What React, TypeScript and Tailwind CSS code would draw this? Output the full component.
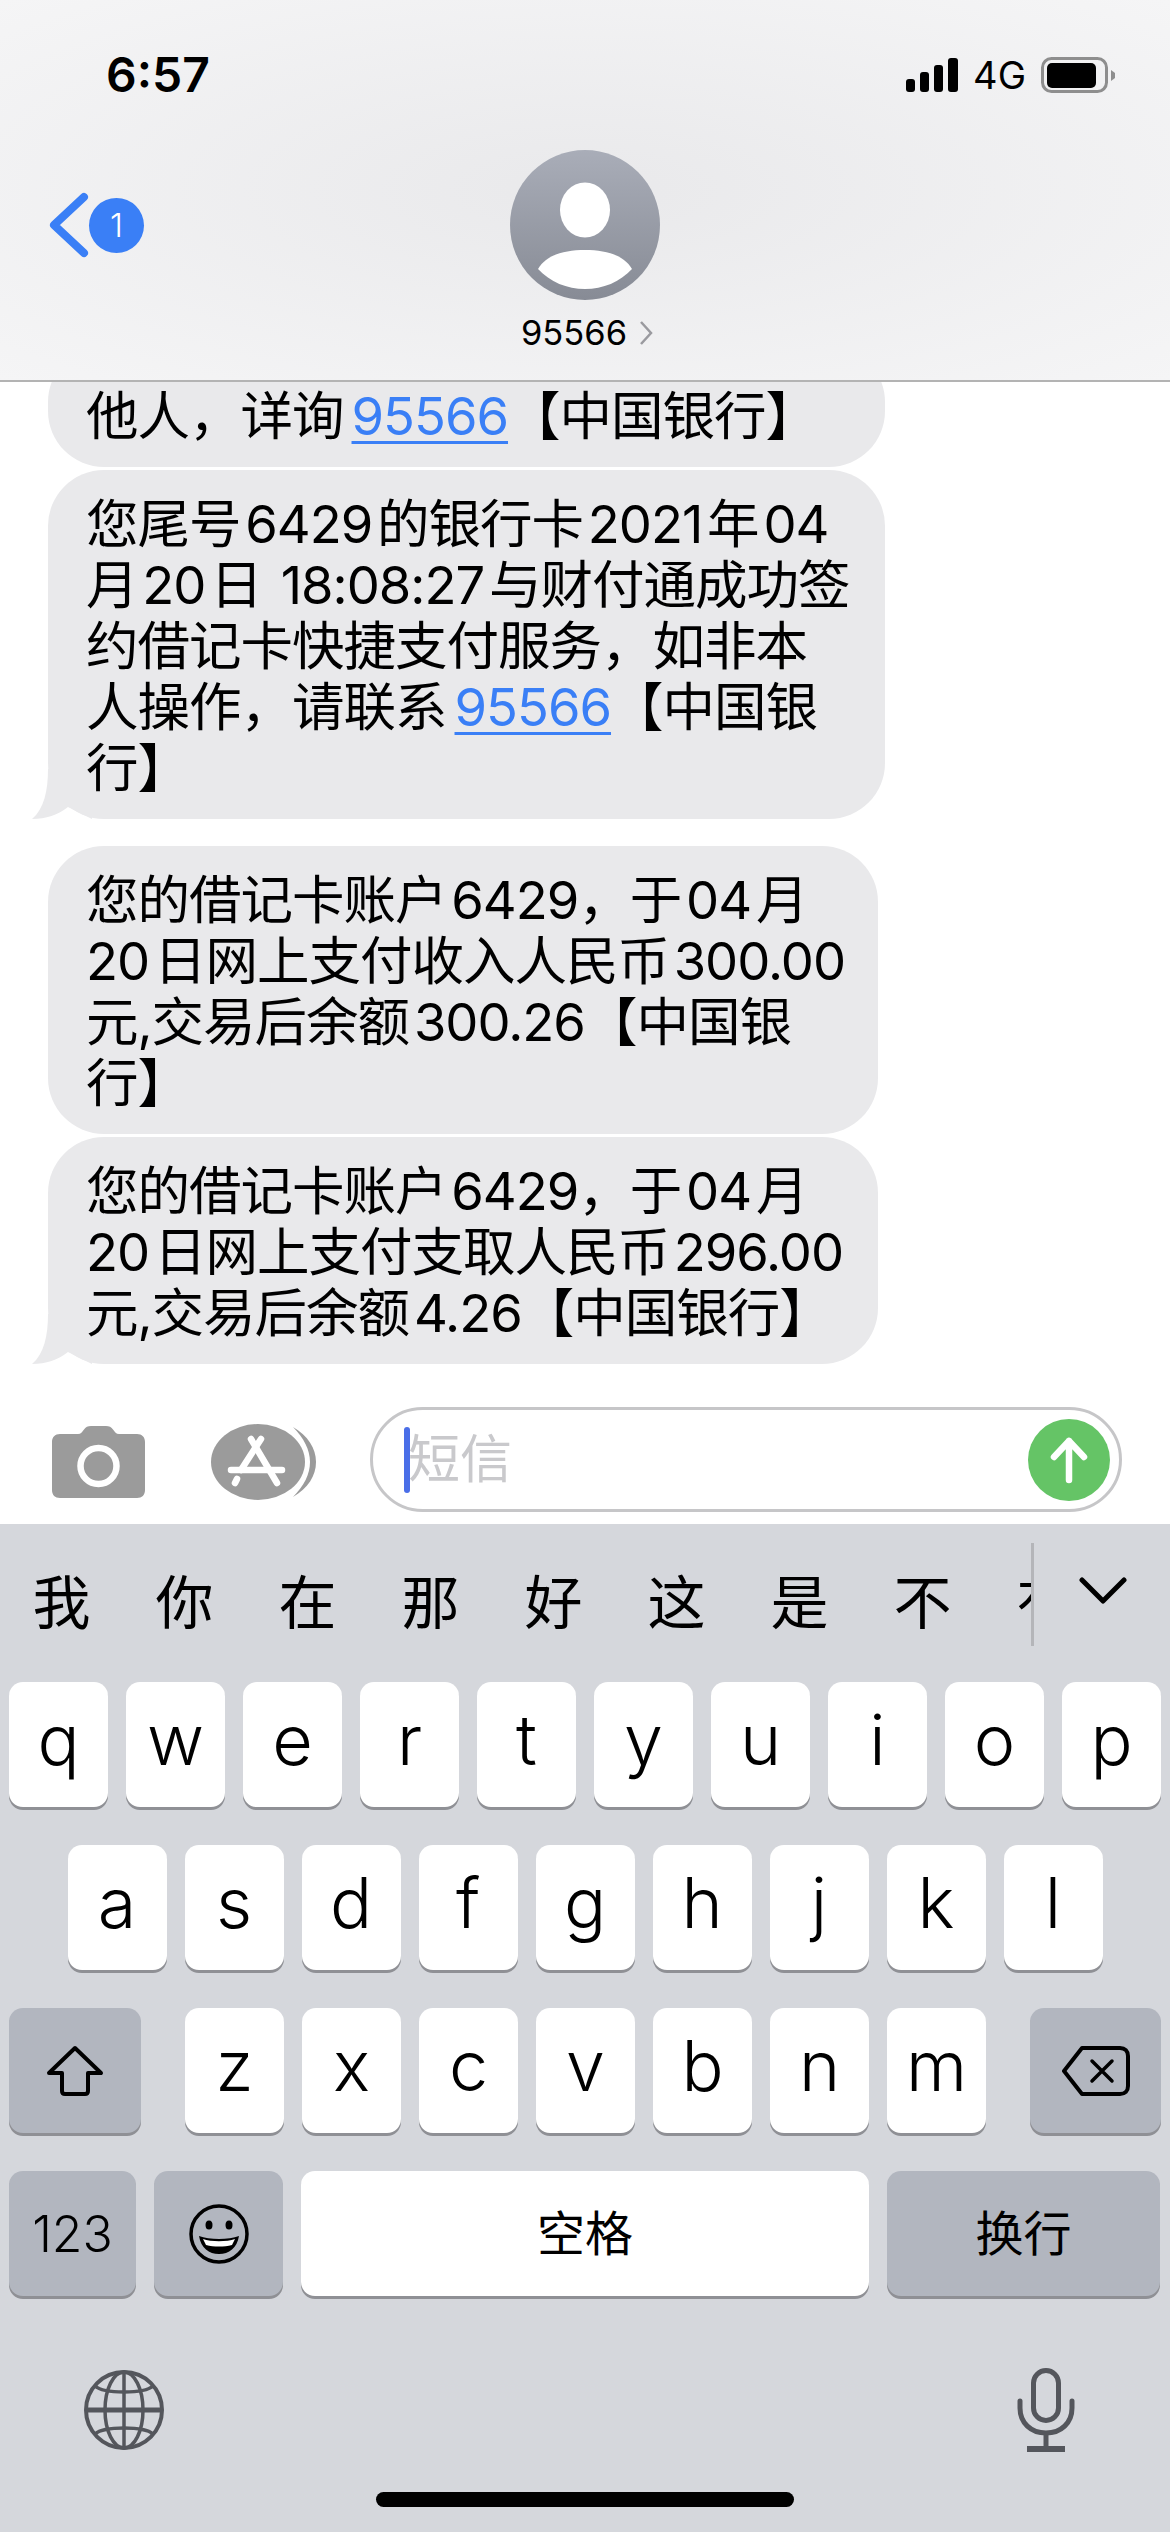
const sans = "font-['Inter','Noto_Sans_CJK_SC',sans-serif]";

function Tail() {
  return (
    <svg className="absolute left-[-16px] bottom-0" width="60" height="50" viewBox="0 0 60 50">
      <path d="M16 0 C16 22 12 40 0 50 C14 50 26 46 36 38 L60 50 L60 0 Z" fill="#e9e9eb" />
    </svg>
  );
}

function Bubble({ width, lines, tail, className }: { width: string; lines: React.ReactNode[]; tail?: boolean; className?: string }) {
  return (
    <div
      className={`relative ml-[48px] shrink-0 rounded-[56px] bg-[#e9e9eb] pb-[20px] pl-[38px] pt-[24px] text-[52.5px] leading-[61px] tracking-[-1px] text-black [word-spacing:-9px] ${width} ${className ?? ""}`}
    >
      {tail && <Tail />}
      {lines.map((l, i) => (
        <div key={i} className="relative whitespace-nowrap">
          {l}
        </div>
      ))}
    </div>
  );
}

function Link({ children }: { children: string }) {
  return <span className="text-[#3a7ff6] underline decoration-[3px] underline-offset-[6px]">{children}</span>;
}

function Key({ children, dark, width = "w-[99px]", className }: { children: React.ReactNode; dark?: boolean; width?: string; className?: string }) {
  return (
    <div
      className={`flex h-[125px] shrink-0 items-center justify-center rounded-[14px] shadow-[0_3px_0_#8f9095] text-black ${dark ? "bg-[#b2b6bf]" : "bg-white"} ${width} ${className ?? ""}`}
    >
      {children}
    </div>
  );
}

function Letter({ c }: { c: string }) {
  return (
    <Key>
      <span className="pb-[10px] text-[70px] font-light leading-none">{c}</span>
    </Key>
  );
}

function Signal() {
  return (
    <svg width="52" height="34" viewBox="0 0 52 34" fill="#000">
      <rect x="0" y="21" width="9" height="13" rx="3" />
      <rect x="14" y="14" width="9" height="20" rx="3" />
      <rect x="28" y="7" width="9" height="27" rx="3" />
      <rect x="42" y="0" width="10" height="34" rx="3" />
    </svg>
  );
}

function Battery() {
  return (
    <svg width="74" height="36" viewBox="0 0 74 36">
      <rect x="1.5" y="1.5" width="64" height="33" rx="9" fill="none" stroke="#8e8e8e" strokeWidth="3" />
      <rect x="6" y="6" width="49" height="25" rx="5" fill="#000" />
      <path d="M70 13 L74 16 L74 21 L70 24 Z" fill="#8e8e8e" />
    </svg>
  );
}

function Avatar() {
  return (
    <svg width="150" height="150" viewBox="0 0 150 150">
      <defs>
        <linearGradient id="av" x1="0" y1="0" x2="0" y2="1">
          <stop offset="0" stopColor="#a9adb8" />
          <stop offset="1" stopColor="#878b95" />
        </linearGradient>
      </defs>
      <circle cx="75" cy="75" r="75" fill="url(#av)" />
      <ellipse cx="75" cy="60" rx="25" ry="27.5" fill="#fff" />
      <path d="M28 119 C36 105 54 100 75 100 C96 100 114 105 122 119 C110 132 93 139 75 139 C57 139 40 132 28 119 Z" fill="#fff" />
    </svg>
  );
}

function Camera() {
  return (
    <svg width="93" height="72" viewBox="0 0 93 72">
      <path
        d="M8 8 H26 C29 8 30 6 32 3.5 C33.5 1 36 0 39 0 H54 C57 0 59.5 1 61 3.5 C63 6 64 8 67 8 H85 C90 8 93 11 93 16 V64 C93 69 90 72 85 72 H8 C3 72 0 69 0 64 V16 C0 11 3 8 8 8 Z"
        fill="#9b9b9b"
      />
      <circle cx="46.5" cy="40" r="18" fill="none" stroke="#fff" strokeWidth="6.5" />
    </svg>
  );
}

function AppStore() {
  return (
    <svg width="106" height="76" viewBox="0 0 106 76">
      <path d="M82 3 C97 12 105 24 105 38 C105 52 97 64 82 73 C93 62 99 50 99 38 C99 26 93 14 82 3 Z" fill="#9b9b9b" />
      <ellipse cx="47" cy="38" rx="47" ry="38" fill="#9b9b9b" />
      <g stroke="#fff" strokeWidth="6.5" strokeLinecap="round" fill="none">
        <path d="M40 15 L66 59" />
        <path d="M50 15 L30 46" />
        <path d="M20 46 H71" />
        <path d="M26 55 L24 59" />
      </g>
    </svg>
  );
}

function Shift() {
  return (
    <svg width="60" height="52" viewBox="0 0 60 52" fill="none" stroke="#000" strokeWidth="4" strokeLinejoin="round">
      <path d="M30 3 L56 28 H43 V46 C43 48 42 49 40 49 H20 C18 49 17 48 17 46 V28 H4 Z" />
    </svg>
  );
}

function Backspace() {
  return (
    <svg width="68" height="50" viewBox="0 0 68 50" fill="none" stroke="#000" strokeWidth="4" strokeLinejoin="round" strokeLinecap="round">
      <path d="M20 2 H58 C63 2 66 5 66 10 V40 C66 45 63 48 58 48 H20 L2 25 Z" />
      <path d="M30 15 L50 35 M50 15 L30 35" strokeWidth="3.5" />
    </svg>
  );
}

function Smiley() {
  return (
    <svg width="60" height="60" viewBox="0 0 60 60">
      <circle cx="30" cy="30" r="28" fill="none" stroke="#000" strokeWidth="3.5" />
      <ellipse cx="20" cy="21" rx="3.5" ry="4.5" fill="#000" />
      <ellipse cx="40" cy="21" rx="3.5" ry="4.5" fill="#000" />
      <path d="M10 32 C20 36 40 36 50 32 C48 44 40 50 30 50 C20 50 12 44 10 32 Z" fill="#000" />
      <path d="M14 35 C22 38 38 38 46 35 C45 37 44 39 43 41 C35 43 25 43 17 41 C16 39 15 37 14 35 Z" fill="#fff" />
    </svg>
  );
}

function Globe() {
  return (
    <svg width="80" height="80" viewBox="0 0 80 80" fill="none" stroke="#54565c" strokeWidth="3.5">
      <circle cx="40" cy="40" r="38" strokeWidth="4" />
      <ellipse cx="40" cy="40" rx="19" ry="38" />
      <path d="M40 2 V78" />
      <path d="M2 40 H78" strokeWidth="5" />
      <path d="M11 16 C20 24 60 24 69 16" />
      <path d="M11 64 C20 56 60 56 69 64" />
    </svg>
  );
}

function Mic() {
  return (
    <svg width="58" height="84" viewBox="0 0 58 84" fill="none" stroke="#54565c" strokeWidth="5">
      <rect x="16.5" y="2.5" width="25" height="50" rx="12.5" />
      <path d="M3 33 V40 C3 55 14 65 29 65 C44 65 55 55 55 40 V33" strokeLinecap="round" />
      <path d="M29 65 V80" />
      <path d="M10 81 H48" strokeWidth="6" />
    </svg>
  );
}

export default function App() {
  const row1 = ["q", "w", "e", "r", "t", "y", "u", "i", "o", "p"];
  const row2 = ["a", "s", "d", "f", "g", "h", "j", "k", "l"];
  const row3 = ["z", "x", "c", "v", "b", "n", "m"];
  const candidates = ["我", "你", "在", "那", "好", "这", "是", "不", "有"];

  return (
    <div className={`flex h-[2532px] w-[1170px] flex-col overflow-hidden bg-white ${sans}`}>
      <header className="relative z-10 h-[382px] shrink-0 border-b-2 border-[#b3b3b3] bg-[radial-gradient(ellipse_at_center,#e9e9eb_0%,#f5f5f6_100%)] pt-[52px]">
        <div className="flex h-[46px] items-center justify-between pl-[106px] pr-[55px]">
          <span className="text-[48px] font-semibold leading-none text-black">6:57</span>
          <div className="flex items-center">
            <Signal />
            <span className="ml-[15px] mr-[15px] text-[38px] leading-none text-black">4G</span>
            <Battery />
          </div>
        </div>
        <div className="mt-[52px] grid grid-cols-[1fr_150px_1fr]">
          <div className="flex h-[150px] items-center pl-[49px]">
            <svg width="40" height="66" viewBox="0 0 40 66" fill="none" stroke="#3a7ff6" strokeWidth="8" strokeLinecap="round" strokeLinejoin="round">
              <path d="M35 5 L5 33 L35 61" />
            </svg>
            <span className="flex h-[55px] w-[55px] items-center justify-center rounded-full bg-[#3a7ff6] text-[33px] font-light leading-none text-white">1</span>
          </div>
          <div className="flex flex-col items-center">
            <Avatar />
            <div className="mt-[16px] flex items-center gap-[12px] whitespace-nowrap pl-[4px]">
              <span className="text-[34.5px] leading-[34px] text-black">95566</span>
              <svg width="14" height="24" viewBox="0 0 14 24" fill="none" stroke="#9a9a9f" strokeWidth="2.5">
                <path d="M2 1 L12 12 L2 23" />
              </svg>
            </div>
          </div>
        </div>
      </header>

      <main className="flex flex-1 flex-col justify-end overflow-hidden">
        <Bubble
          width="w-[837px]"
          className="pt-[40px]"
          lines={[
            <>
              他人，详询<span className="ml-[8px]"><Link>95566</Link></span>【中国银行】
            </>,
          ]}
        />
        <Bubble
          width="w-[837px]"
          className="mt-[3px]"
          tail
          lines={[
            "您尾号 6429 的银行卡 2021 年 04",
            "月 20 日\u00a0\u00a0\u00a0\u00a018:08:27 与财付通成功签",
            "约借记卡快捷支付服务，如非本",
            <>
              人操作，请联系<span className="ml-[8px]"><Link>95566</Link></span>【中国银
            </>,
            "行】",
          ]}
        />
        <Bubble
          width="w-[830px]"
          className="mt-[27px]"
          lines={["您的借记卡账户 6429，于 04 月", "20 日网上支付收入人民币 300.00", "元,交易后余额 300.26【中国银", "行】"]}
        />
        <Bubble
          width="w-[830px]"
          className="mt-[3px]"
          tail
          lines={["您的借记卡账户 6429，于 04 月", "20 日网上支付支取人民币 296.00", "元,交易后余额 4.26【中国银行】"]}
        />
      </main>

      <section className="flex h-[160px] shrink-0 items-start pl-[52px] pt-[43px]">
        <div className="mt-[17px] flex items-center">
          <Camera />
          <div className="ml-[66px]">
            <AppStore />
          </div>
        </div>
        <div className="ml-[53px] flex h-[105px] w-[752px] items-center rounded-full border-[3px] border-[#c6c6c8] pl-[31px] pr-[9px]">
          <span className="h-[66px] w-[6px] shrink-0 rounded-full bg-[#4a6ee8]" />
          <span className="ml-[-2px] flex-1 text-[52px] leading-none text-[#c9c9cc]">短信</span>
          <span className="flex h-[82px] w-[82px] items-center justify-center rounded-full bg-[#65c466]">
            <svg width="44" height="48" viewBox="0 0 44 48" fill="none" stroke="#fff" strokeWidth="6.5" strokeLinecap="round" strokeLinejoin="round">
              <path d="M22 44 V5 M7 21 L22 5 L37 21" />
            </svg>
          </span>
        </div>
      </section>

      <section className="flex h-[1008px] shrink-0 flex-col bg-[#d5d7dc]">
        <div className="flex h-[158px] shrink-0 items-start">
          <div className="mt-[19px] flex h-[103px] w-[1034px] overflow-hidden border-r-[3px] border-[#b4b5b9]">
            {candidates.map((c) => (
              <span key={c} className="flex h-[103px] w-[123px] shrink-0 items-center justify-center pt-[16px] text-[58px] leading-none text-black">
                {c}
              </span>
            ))}
          </div>
          <svg className="ml-[45px] mt-[53px]" width="48" height="28" viewBox="0 0 48 28" fill="none" stroke="#000" strokeWidth="5" strokeLinecap="round" strokeLinejoin="round">
            <path d="M3 3 L24 24 L45 3" />
          </svg>
        </div>

        <div className="flex flex-col gap-[38px] px-[9px]">
          <div className="flex justify-center gap-[18px]">
            {row1.map((c) => (
              <Letter key={c} c={c} />
            ))}
          </div>
          <div className="flex justify-center gap-[18px]">
            {row2.map((c) => (
              <Letter key={c} c={c} />
            ))}
          </div>
          <div className="flex items-center justify-between">
            <Key dark width="w-[132px]">
              <Shift />
            </Key>
            <div className="flex gap-[18px]">
              {row3.map((c) => (
                <Letter key={c} c={c} />
              ))}
            </div>
            <Key dark width="w-[131px]">
              <Backspace />
            </Key>
          </div>
          <div className="flex gap-[18px]">
            <Key dark width="w-[127px]">
              <span className="text-[50px] font-light leading-none">123</span>
            </Key>
            <Key dark width="w-[129px]">
              <Smiley />
            </Key>
            <Key width="w-[568px]">
              <span className="text-[48px] leading-none">空格</span>
            </Key>
            <Key dark width="w-[273px]">
              <span className="text-[48px] leading-none">换行</span>
            </Key>
          </div>
        </div>

        <div className="mt-[72px] flex items-center justify-between pl-[84px] pr-[95px]">
          <Globe />
          <Mic />
        </div>
        <div className="mx-auto mt-[40px] h-[15px] w-[418px] rounded-full bg-black" />
      </section>
    </div>
  );
}
